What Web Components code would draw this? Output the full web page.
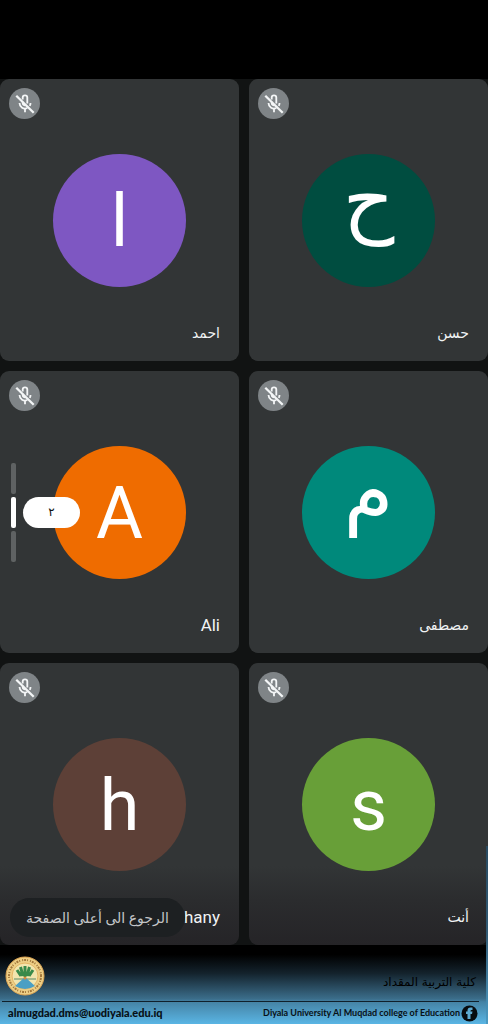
<!DOCTYPE html>
<html lang="ar">
<head>
<meta charset="utf-8">
<meta name="viewport" content="width=device-width, initial-scale=1">
<title>Meeting</title>
<style>
  body {
    margin: 0;
    background: #000;
    color: #f1f3f4;
    font-family: Roboto, "DejaVu Sans", sans-serif;
  }
</style>
</head>
<body>
<meeting-screen>
  <participant-tile letter="ا" color="#7e57c2">احمد</participant-tile>
  <participant-tile letter="ح" color="#004d40" descender>حسن</participant-tile>
  <participant-tile letter="A" color="#ef6c00" lang="en">Ali</participant-tile>
  <participant-tile letter="م" color="#00897b" descender>مصطفى</participant-tile>
  <participant-tile letter="h" color="#5d4037" lang="en" faded>hany</participant-tile>
  <participant-tile letter="s" color="#689f38" faded>أنت</participant-tile>
  <page-indicator slot="pages">٢</page-indicator>
  <top-button slot="action">الرجوع الى أعلى الصفحة</top-button>
  <college-footer slot="footer"></college-footer>
</meeting-screen>

<script>
class MeetingScreen extends HTMLElement {
  constructor() {
    super();
    this.attachShadow({ mode: 'open' }).innerHTML = `
      <style>
        :host {
          display: flex;
          flex-direction: column;
          min-height: 100vh;
          padding-top: 79px;
          box-sizing: border-box;
          position: relative;
          overflow: hidden;
        }
        .stage {
          position: relative;
          flex: 1;
          display: grid;
          background: #111313;
        }
        .grid {
          display: grid;
          grid-template-columns: 1fr 1fr;
          grid-auto-rows: minmax(282px, 1fr);
          gap: 10px;
        }
        /* both float over the tiles */
        .pages {
          position: absolute;
          left: 11px;
          top: 0;
          bottom: 0;
          display: flex;
          align-items: center;
        }
        .action {
          position: absolute;
          left: 10px;
          bottom: 8px;
        }
        .edge {
          position: absolute;
          right: 0;
          bottom: 0;
          width: 2px;
          height: 178px;
          background: linear-gradient(#294a60, #315a74 50%, #4b9bc4);
        }
      </style>
      <div class="stage">
        <div class="grid"><slot></slot></div>
        <div class="pages"><slot name="pages"></slot></div>
        <div class="action"><slot name="action"></slot></div>
      </div>
      <slot name="footer"></slot>
      <div class="edge"></div>
    `;
  }
}

class MicOff extends HTMLElement {
  constructor() {
    super();
    this.attachShadow({ mode: 'open' }).innerHTML = `
      <style>
        :host {
          display: flex;
          align-items: center;
          justify-content: center;
          width: 31px;
          height: 31px;
          border-radius: 50%;
          background: #7f8487;
        }
      </style>
      <svg width="22" height="22" viewBox="0 0 24 24" fill="none" stroke="#f4f6f7" stroke-width="2" aria-hidden="true">
        <path d="M9.500 7V5a2.500 2.500 0 0 1 5 0v6.500"/>
        <path d="M9.500 9.500V11a2.500 2.500 0 0 0 3 2.500"/>
        <path d="M6 11a6 6 0 0 0 8.500 5.400M18 11a6 6 0 0 1-.8 3"/>
        <path d="M12 17v4"/>
        <path d="M2.500 3 21.500 21.500" stroke-width="2.500"/>
      </svg>
    `;
  }
}

class ParticipantTile extends HTMLElement {
  constructor() {
    super();
    this.attachShadow({ mode: 'open' }).innerHTML = `
      <style>
        :host {
          display: grid;
          grid-template-rows: 1fr 133px 1fr;
          justify-items: center;
          box-sizing: border-box;
          padding: 9px;
          border-radius: 9px;
          background: #323536;
        }
        :host([faded]) {
          background: linear-gradient(#323536 72%, #2b2c2e 84%, #252427);
        }
        mic-off {
          justify-self: start;
        }
        .avatar {
          display: flex;
          align-items: center;
          justify-content: center;
          box-sizing: border-box;
          width: 133px;
          height: 133px;
          padding-top: 4px;
          border-radius: 50%;
          color: #fff;
          font-size: 72px;
          line-height: 80px;
        }
        /* letters that hang below the baseline are lifted to the middle */
        :host([descender]) .avatar {
          padding: 0 0 40px;
          font-size: 80px;
        }
        .name {
          align-self: end;
          justify-self: end;
          margin: 0 10px 9px;
          font-size: 14px;
          line-height: 20px;
        }
        :host([lang="en"]) .name {
          font-size: 17px;
        }
      </style>
      <mic-off></mic-off>
      <div class="avatar"></div>
      <div class="name" dir="auto"><slot></slot></div>
    `;
  }

  connectedCallback() {
    const avatar = this.shadowRoot.querySelector('.avatar');
    avatar.textContent = this.getAttribute('letter');
    avatar.style.background = this.getAttribute('color');
  }
}

class PageIndicator extends HTMLElement {
  constructor() {
    super();
    this.attachShadow({ mode: 'open' }).innerHTML = `
      <style>
        :host {
          display: flex;
          align-items: center;
          gap: 7px;
        }
        .bars {
          display: grid;
          gap: 3px;
        }
        i {
          width: 5px;
          height: 31px;
          border-radius: 2px;
          background: #5f6263;
        }
        .on {
          background: #fff;
        }
        .label {
          width: 57px;
          border-radius: 16px;
          background: #fff;
          color: #111;
          font-size: 12px;
          line-height: 31px;
          text-align: center;
        }
      </style>
      <div class="bars"><i></i><i class="on"></i><i></i></div>
      <div class="label"><slot></slot></div>
    `;
  }
}

class TopButton extends HTMLElement {
  constructor() {
    super();
    this.attachShadow({ mode: 'open' }).innerHTML = `
      <style>
        :host {
          display: block;
        }
        button {
          display: block;
          border: 0;
          border-radius: 20px;
          padding: 0 16px;
          height: 39px;
          background: #1d2022;
          color: #c4c6c8;
          font: 14px/36px Roboto, "DejaVu Sans", sans-serif;
          white-space: nowrap;
        }
      </style>
      <button type="button" dir="rtl"><slot></slot></button>
    `;
  }
}

class CollegeSeal extends HTMLElement {
  constructor() {
    super();
    this.attachShadow({ mode: 'open' }).innerHTML = `
      <style>
        :host {
          display: block;
          width: 40px;
          height: 40px;
        }
      </style>
      <svg width="40" height="40" viewBox="0 0 40 40" aria-hidden="true">
        <circle cx="20" cy="20" r="19" fill="#edcf86" stroke="#dfa653"/>
        <circle cx="20" cy="20" r="16" fill="none" stroke="#a3783c" stroke-width="2" stroke-dasharray="1 1 2 1 1 2"/>
        <circle cx="20" cy="20" r="13" fill="#f1e5ae" stroke="#e6b564"/>
        <g fill="none" stroke="#388a4a" stroke-width="3">
          <path d="M20 21V10M18 20 15.500 11M22 20l2.500-9M16 20l-4-6M24 20l4-6"/>
        </g>
        <path d="M9 23h22" stroke="#5b8a66"/>
        <path d="M20 21 10 30q10 6 20 0z" fill="#4b9fc4"/>
        <circle cx="20" cy="22" r="1.500" fill="#d88b3a"/>
      </svg>
    `;
  }
}

class CollegeFooter extends HTMLElement {
  constructor() {
    super();
    this.attachShadow({ mode: 'open' }).innerHTML = `
      <style>
        :host {
          display: block;
          background: linear-gradient(#000 12%, #14232d 36%, #3b6d8a 68%, #4583a5 72%, #5ab5e4);
          color: #071016;
        }
        .brand, .links {
          display: flex;
          justify-content: space-between;
          align-items: center;
        }
        .brand {
          height: 56px;
          padding: 5px 12px 0 5px;
          box-sizing: border-box;
        }
        .college {
          padding-top: 12px;
          color: #000;
          font: 12px/24px "DejaVu Sans", sans-serif;
        }
        .links {
          height: 22px;
          margin: 0 9px 0 2px;
          padding: 0 1px 0 6px;
          border-top: 1px solid #10202b;
        }
        a {
          color: inherit;
          text-decoration: none;
        }
        .mail {
          font: 900 11px/20px Lato, sans-serif;
        }
        .page {
          display: flex;
          align-items: center;
          gap: 1px;
          font: bold 9px/20px Lato, sans-serif;
        }
      </style>
      <div class="brand">
        <college-seal></college-seal>
        <div class="college" dir="rtl">كلية التربية المقداد</div>
      </div>
      <div class="links">
        <a class="mail" href="mailto:almugdad.dms@uodiyala.edu.iq">almugdad.dms@uodiyala.edu.iq</a>
        <a class="page" href="#">Diyala University Al Muqdad college of Education
          <svg width="17" height="17" viewBox="0 0 17 17" aria-hidden="true">
            <circle cx="8.500" cy="8.500" r="8" fill="#070b0e"/>
            <path d="M6.500 14V9H5V6.500h1.500V5.500Q6.500 2.500 9.500 2.500h2V5h-1q-1 0-1 1v.5h2L11 9H9.500v5z" fill="#5da9d0"/>
          </svg>
        </a>
      </div>
    `;
  }
}

customElements.define('mic-off', MicOff);
customElements.define('participant-tile', ParticipantTile);
customElements.define('page-indicator', PageIndicator);
customElements.define('top-button', TopButton);
customElements.define('college-seal', CollegeSeal);
customElements.define('college-footer', CollegeFooter);
customElements.define('meeting-screen', MeetingScreen);
</script>
</body>
</html>
